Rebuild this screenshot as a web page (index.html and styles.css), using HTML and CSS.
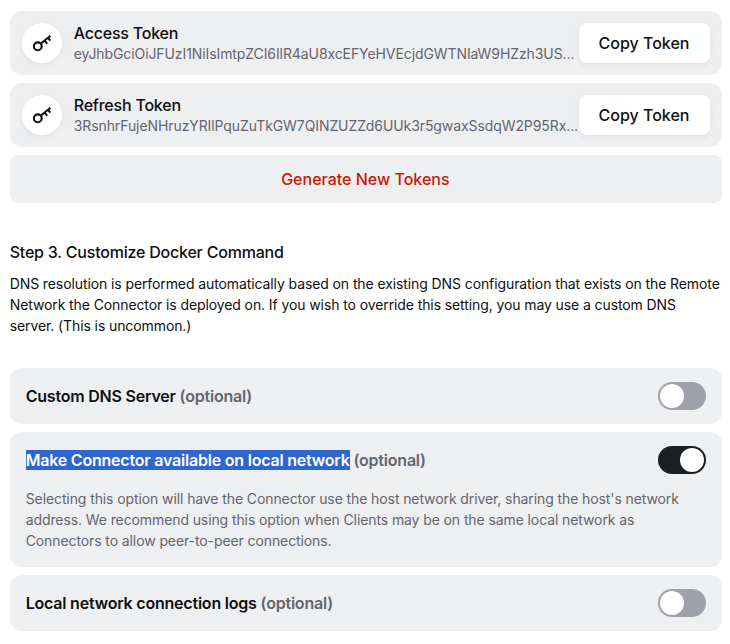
FILE: index.html
```html
<!DOCTYPE html>
<html lang="en">
<head>
<meta charset="utf-8">
<title>Connector setup</title>
<link rel="stylesheet" href="styles.css">
</head>
<body>
<main class="page">
  <section class="stack">
    <div class="token">
      <span class="token-icon"><svg width="20" height="20" viewBox="0 0 20 20" fill="none" stroke="currentColor" stroke-width="2.1"><circle cx="5.8" cy="13.3" r="3.9"/><path d="M8.6 10.7 18.4 2.8M12.6 7.6l2.5 3M16 4.8l2.3 2.8"/></svg></span>
      <div class="token-text">
        <div class="token-name">Access Token</div>
        <div class="token-value">eyJhbGciOiJFUzI1NiIsImtpZCI6IlR4aU8xcEFYeHVEcjdGWTNIaW9HZzh3US...</div>
      </div>
      <button class="copy">Copy Token</button>
    </div>
    <div class="token">
      <span class="token-icon"><svg width="20" height="20" viewBox="0 0 20 20" fill="none" stroke="currentColor" stroke-width="2.1"><circle cx="5.8" cy="13.3" r="3.9"/><path d="M8.6 10.7 18.4 2.8M12.6 7.6l2.5 3M16 4.8l2.3 2.8"/></svg></span>
      <div class="token-text">
        <div class="token-name">Refresh Token</div>
        <div class="token-value">3RsnhrFujeNHruzYRIlPquZuTkGW7QINZUZZd6UUk3r5gwaxSsdqW2P95Rx...</div>
      </div>
      <button class="copy">Copy Token</button>
    </div>
    <button class="generate">Generate New Tokens</button>
  </section>

  <section class="step">
    <h2 class="step-title">Step 3. Customize Docker Command</h2>
    <p class="step-text">DNS resolution is performed automatically based on the existing DNS configuration that exists on the Remote Network the Connector is deployed on. If you wish to override this setting, you may use a custom DNS server. (This is uncommon.)</p>
  </section>

  <section class="stack">
    <div class="option">
      <div class="option-head">
        <div class="option-name">Custom DNS Server <span class="optional">(optional)</span></div>
        <span class="toggle" role="switch" aria-checked="false"></span>
      </div>
    </div>
    <div class="option">
      <div class="option-head">
        <div class="option-name"><span class="selected">Make Connector available on local network</span> <span class="optional">(optional)</span></div>
        <span class="toggle on" role="switch" aria-checked="true"></span>
      </div>
      <p class="option-text">Selecting this option will have the Connector use the host network driver, sharing the host's network address. We recommend using this option when Clients may be on the same local network as Connectors to allow peer-to-peer connections.</p>
    </div>
    <div class="option">
      <div class="option-head">
        <div class="option-name">Local network connection logs <span class="optional">(optional)</span></div>
        <span class="toggle" role="switch" aria-checked="false"></span>
      </div>
    </div>
  </section>
</main>
</body>
</html>
```
FILE: styles.css
```css
* { box-sizing: border-box; }
body {
  margin: 0;
  background: #fff;
  color: #0e0f11;
  font-family: Inter, "Liberation Sans", sans-serif;
}
.page { padding: 11px 8px 0 9.7px; }
.stack { display: flex; flex-direction: column; gap: 8px; }
button { border: 0; font: inherit; color: inherit; }

.token {
  display: flex;
  align-items: center;
  height: 64px;
  padding: 12px;
  border-radius: 12px;
  background: #eeeff1;
}
.token-icon {
  display: flex;
  align-items: center;
  justify-content: center;
  flex: none;
  width: 40px;
  height: 40px;
  margin-right: 12px;
  border-radius: 50%;
  background: #fff;
  box-shadow: 0 2px 6px rgba(0, 0, 0, 0.06);
}
.token-text { flex: 1; min-width: 0; white-space: nowrap; }
.token-name { padding-top: 1px; font-size: 16px; font-weight: 500; line-height: 21px; letter-spacing: -0.21px; }
.token-value { margin-top: -1px; font-size: 14px; line-height: 21px; letter-spacing: -0.09px; color: #65656d; }
.copy {
  flex: none;
  width: 131px;
  height: 40px;
  padding: 0 1px 0 0;
  border-radius: 8px;
  background: #fff;
  font-size: 16px;
  font-weight: 500;
  box-shadow: 0 2px 6px rgba(0, 0, 0, 0.06);
}
.generate {
  height: 48px;
  padding: 0 1px 0 0;
  border-radius: 8px;
  background: #eeeff1;
  color: #cf1608;
  font-size: 16px;
  font-weight: 500;
}

.step { padding: 37px 0 32px; }
.step-title { margin: 0 0 9px; font-size: 16px; font-weight: 500; line-height: 24px; letter-spacing: -0.21px; }
.step-text { margin: 0; font-size: 14px; line-height: 21px; letter-spacing: -0.1px; }

.option { padding: 14px 16px; border-radius: 12px; background: #eeeff1; }
.option-head { display: flex; align-items: center; justify-content: space-between; height: 28px; }
.option-name { font-size: 16px; font-weight: 600; line-height: 24px; letter-spacing: -0.21px; }
.optional { color: #65656d; }
.selected { background: #3066d0; color: #fff; }
.option-text { margin: 14px 0 2px; font-size: 14px; line-height: 21px; letter-spacing: -0.1px; color: #65656d; }
.toggle {
  display: flex;
  flex: none;
  width: 48px;
  height: 28px;
  padding: 2px;
  border-radius: 14px;
  background: #a1a1aa;
}
.toggle::before { content: ""; width: 24px; height: 24px; border-radius: 50%; background: #fff; }
.toggle.on { justify-content: flex-end; background: #1c1f22; }
```
